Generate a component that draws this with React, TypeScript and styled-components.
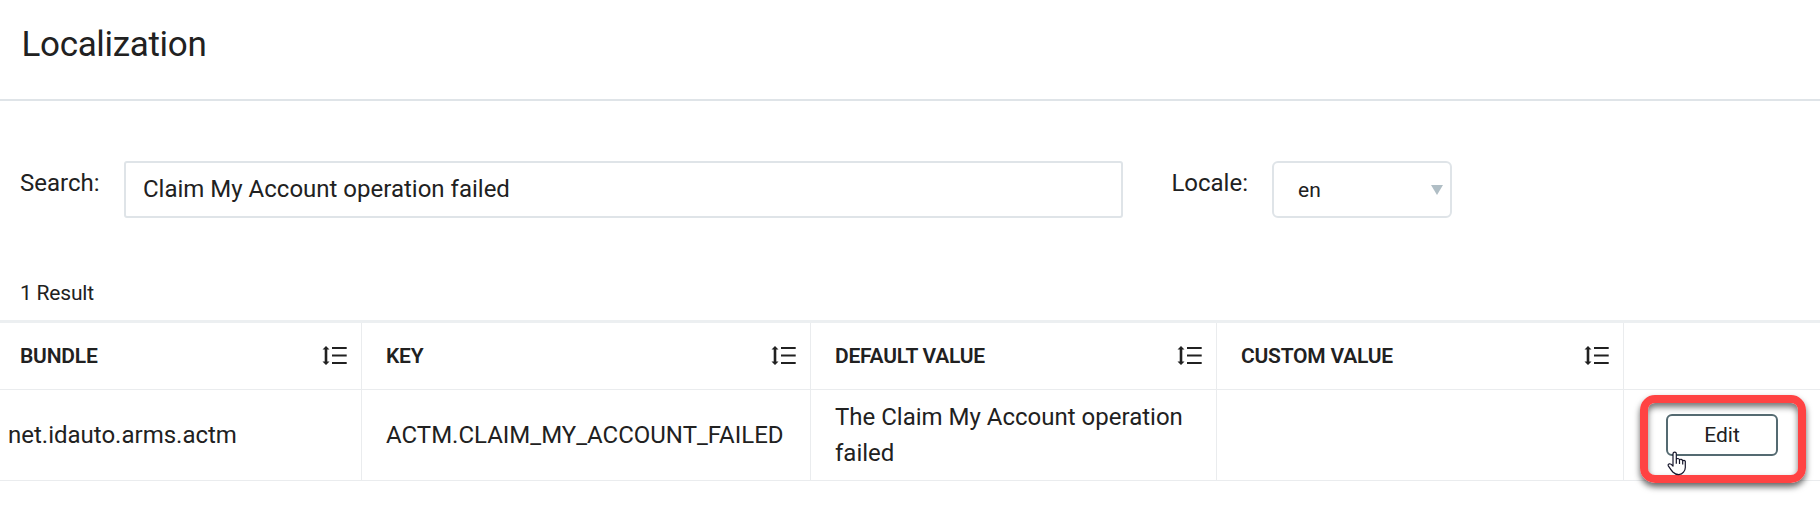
import React from "react";
import styled, { createGlobalStyle } from "styled-components";

const GlobalStyle = createGlobalStyle`
  * { box-sizing: border-box; }
  body { margin: 0; background: #fff; color: #212121; font-family: Roboto, sans-serif; font-size: 24px; font-weight: 400; }
`;

const Page = styled.main`
  height: 514px;
  overflow: hidden;
  display: flex;
  flex-direction: column;
`;

const Header = styled.header`
  height: 101px;
  padding: 24px 0 0 21.5px;
  border-bottom: 2px solid #dfe4e8;
`;

const Title = styled.h1`
  margin: 0;
  font-size: 35px;
  font-weight: 400;
  line-height: 42px;
  letter-spacing: -0.33px;
`;

const Filters = styled.form`
  display: flex;
  height: 117px;
  padding-top: 60px;
`;

const Label = styled.label<{ $width: number; $indent: number }>`
  width: ${(p) => p.$width}px;
  padding-left: ${(p) => p.$indent}px;
  line-height: 44px;
`;

const SearchInput = styled.input`
  width: 999px;
  height: 57px;
  padding: 0 0 2px 17px;
  border: 2px solid #dfe4e8;
  border-radius: 3px;
  outline: none;
  color: inherit;
  font: inherit;
`;

const LocaleSelect = styled.button`
  display: flex;
  align-items: center;
  justify-content: space-between;
  width: 180px;
  height: 57px;
  padding: 0 7px 0 24px;
  border: 2px solid #dfe4e8;
  border-radius: 6px;
  background: #fff;
  color: inherit;
  font: inherit;
  font-size: 21px;
`;

const Results = styled.p`
  height: 102px;
  margin: 0;
  padding: 62px 0 0 20px;
  font-size: 21px;
  line-height: 26px;
  letter-spacing: -0.2px;
`;

const Table = styled.section`
  border-top: 3px solid #eceff1;
`;

const Row = styled.div<{ $height: number }>`
  display: grid;
  grid-template-columns: 362px 449px 406px 407px 1fr;
  grid-template-rows: 100%;
  height: ${(p) => p.$height}px;
  border-bottom: 1px solid #eaecee;
`;

const HeadCell = styled.div`
  display: flex;
  align-items: center;
  justify-content: space-between;
  padding: 0 14px 0 24px;
  border-right: 1px solid #eaecee;
  font-size: 21px;
  font-weight: 600;
  letter-spacing: -0.22px;
  &:first-child { padding-left: 20px; }
  &:last-child { border-right: 0; }
`;

const Cell = styled.div`
  display: flex;
  align-items: center;
  padding: 0 24px;
  border-right: 1px solid #eaecee;
  line-height: 36px;
  &:first-child { padding-left: 8px; }
  &:last-child { border-right: 0; padding: 5px 14px 0 16px; align-items: flex-start; }
`;

const Highlight = styled.div`
  position: relative;
  flex: none;
  width: 166px;
  height: 88px;
  padding: 11px 0 0 18px;
  border: 8px solid #ff4343;
  border-radius: 15px;
  box-shadow: 0 4px 6px rgba(0, 0, 0, 0.6), inset 0 4px 6px rgba(0, 0, 0, 0.55);
`;

const EditButton = styled.button`
  display: block;
  width: 112px;
  height: 42px;
  padding: 0;
  border: 2px solid #546a71;
  border-radius: 6px;
  background: #fff;
  color: inherit;
  font: inherit;
  font-size: 21px;
`;

const Pointer = styled.svg`
  position: absolute;
  left: 19px;
  top: 48px;
`;

const SortIcon = () => (
  <svg width="25" height="20" viewBox="0 0 25 20" fill="#212121">
    <path d="M4 0 7.5 3.6H5.3v11.8h2.2L4 19 .5 15.4h2.2V3.6H.5z" />
    <path d="M10 1h14.7v2.1H10zM10 8.6h14.7v1.9H10zM10 16h14.7v2.1H10z" />
  </svg>
);

const columns = ["BUNDLE", "KEY", "DEFAULT VALUE", "CUSTOM VALUE"];

export default function App() {
  return (
    <Page>
      <GlobalStyle />
      <Header><Title>Localization</Title></Header>
      <Filters>
        <Label $width={124} $indent={20} htmlFor="search">Search:</Label>
        <SearchInput id="search" defaultValue="Claim My Account operation failed" />
        <Label $width={149} $indent={48.4}>Locale:</Label>
        <LocaleSelect type="button">
          en
          <svg width="12" height="10" viewBox="0 0 12 10"><path d="M0 0h12L6 10z" fill="#b0bec5" /></svg>
        </LocaleSelect>
      </Filters>
      <Results>1 Result</Results>
      <Table>
        <Row $height={67}>
          {columns.map((name) => (
            <HeadCell key={name}><span>{name}</span><SortIcon /></HeadCell>
          ))}
          <HeadCell />
        </Row>
        <Row $height={91}>
          <Cell>net.idauto.arms.actm</Cell>
          <Cell>ACTM.CLAIM_MY_ACCOUNT_FAILED</Cell>
          <Cell>The Claim My Account operation failed</Cell>
          <Cell />
          <Cell>
            <Highlight>
              <EditButton>Edit</EditButton>
              <Pointer width="20" height="25" viewBox="0 0 20 25">
                <path
                  d="M6 15V3.2Q6 1.2 7.7 1.2T9.3 3.2V9Q9.5 7.3 11 7.5T12.5 9.2Q13 8 14.3 8.3T15.7 10Q17 8.8 18.3 10.2V16.5Q18.3 19 16.5 21.2 14.8 23.6 11.8 23.6 8.3 23.6 5.8 21 3.7 18.4 1.3 14.8.7 13.2 2.3 12.8 3.6 12.5 6 15ZM9.3 9v3.8M12.5 9.2v3.8M15.7 10v3.6"
                  fill="#fff" stroke="#15152a" strokeWidth="1.2" strokeLinejoin="round"
                />
              </Pointer>
            </Highlight>
          </Cell>
        </Row>
      </Table>
    </Page>
  );
}
